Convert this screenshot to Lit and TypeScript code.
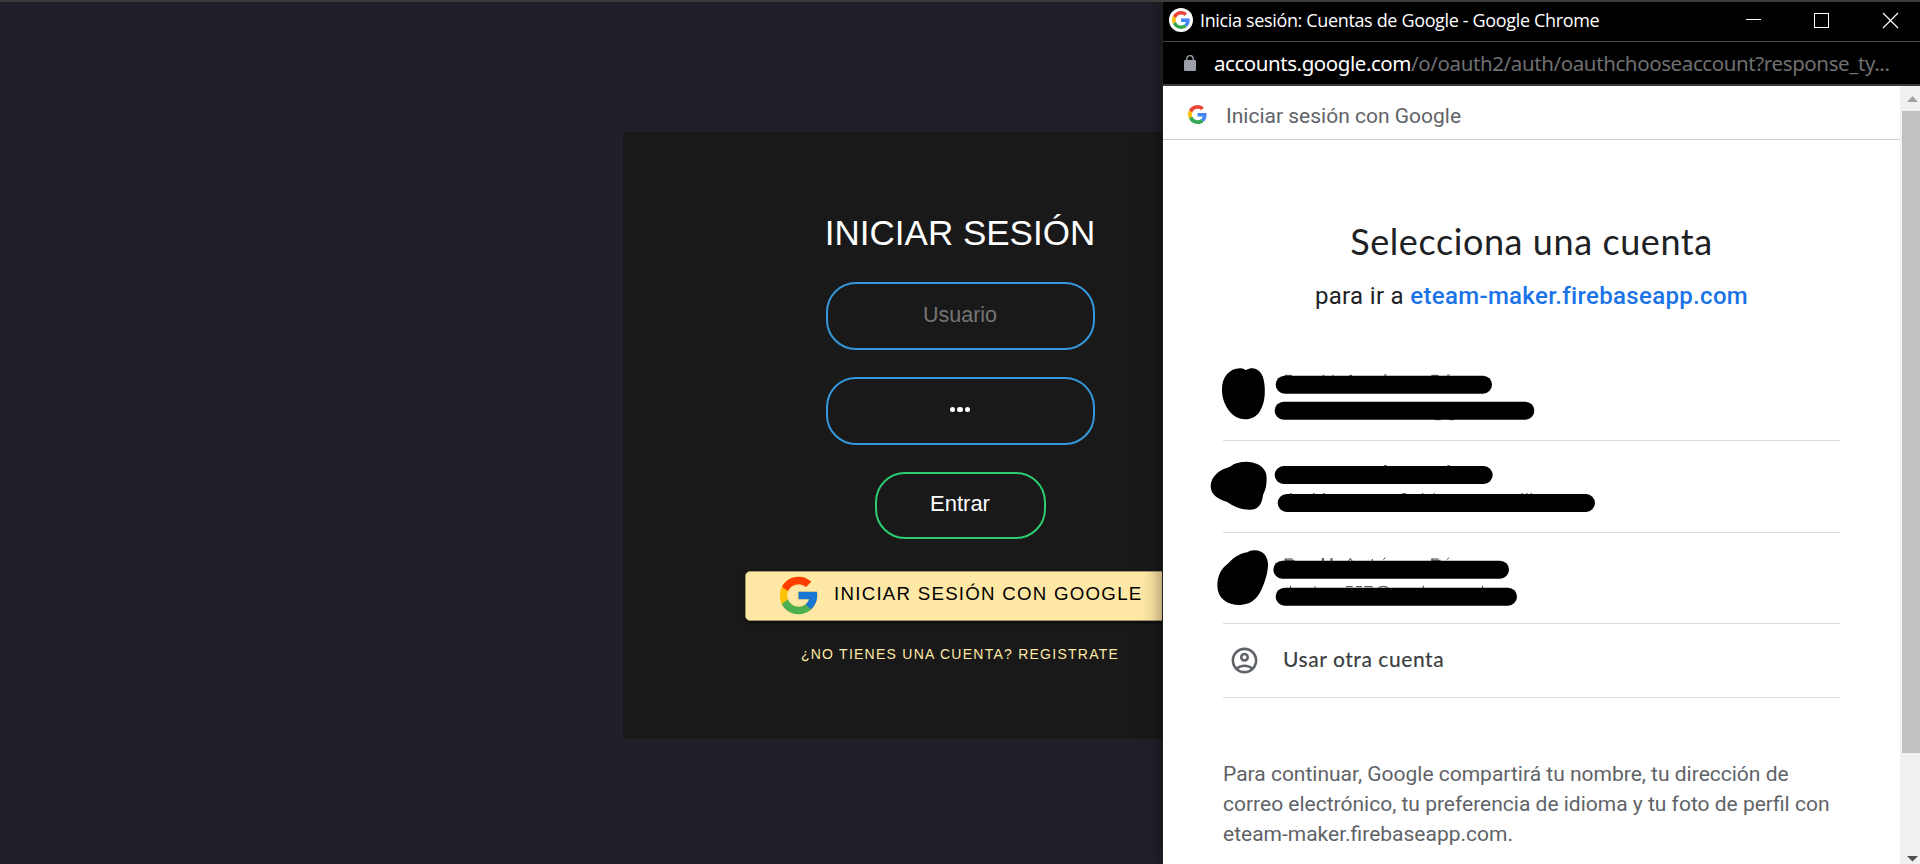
import { LitElement, html, css, svg } from "lit";
import { customElement } from "lit/decorators.js";

const googleG = (cls: string) => html`<svg class=${cls} viewBox="0 0 48 48" aria-hidden="true">
  <path fill="#ea4335" d="M24 9.5c3.54 0 6.71 1.22 9.21 3.6l6.85-6.85C35.9 2.38 30.47 0 24 0 14.62 0 6.51 5.38 2.56 13.22l7.98 6.19C12.43 13.72 17.74 9.5 24 9.5z"/>
  <path fill="#4285f4" d="M46.98 24.55c0-1.57-.15-3.09-.38-4.55H24v9.02h12.94c-.58 2.96-2.26 5.48-4.78 7.18l7.73 6c4.51-4.18 7.09-10.36 7.09-17.65z"/>
  <path fill="#fbbc05" d="M10.53 28.59c-.48-1.45-.76-2.99-.76-4.59s.27-3.14.76-4.59l-7.98-6.19C.92 16.46 0 20.12 0 24c0 3.88.92 7.54 2.56 10.78l7.97-6.19z"/>
  <path fill="#34a853" d="M24 48c6.48 0 11.93-2.13 15.89-5.81l-7.73-6c-2.15 1.45-4.92 2.3-8.16 2.3-6.26 0-11.57-4.22-13.47-9.91l-7.98 6.19C6.51 42.62 14.62 48 24 48z"/>
</svg>`;

interface Account { cls: string; viewBox: string; blob: string; bars: number[][]; bits: string; }

/* Hidden accounts: scribbled avatar plus two thick marker strokes [x1, x2, y]. */
const accounts: Account[] = [
  {
    cls: "row", viewBox: "99 -3 1851 273",
    blob: "M150 55C160 54 163 60 168 60C175 57 180 55 187 55C213 57 222 80 224 110C226 140 222 165 207 188C195 202 180 208 165 208C140 208 122 192 110 172C98 150 95 130 96 115C97 80 118 56 150 55Z",
    bars: [[257, 906, 104], [254, 1033, 182]],
    bits: "M284 76h22M398 76h5M427 76h4M478 76h8M582 75h8M724 76h22M771 75h8M736 209h16M778 209h14",
  },
  {
    cls: "row", viewBox: "99 273 1851 273",
    blob: "M168 335C200 335 222 350 228 370C232 390 230 415 219 435C216 460 208 478 182 479C150 480 130 468 110 455C85 448 62 435 62 408C63 380 85 360 120 350C135 338 150 336 168 335Z",
    bars: [[254, 908, 375], [263, 1215, 459]],
    bits: "M582 347h8M772 347h7M300 431h5M369 431h5M400 431h5M637 431h11M696 431h4M731 431h4M994 431h4M1009 431h4M1022 431h4",
  },
  {
    cls: "row short", viewBox: "99 39 1851 270",
    blob: "M192 91C220 90 234 110 234 135C233 165 222 190 215 208C200 240 180 254 150 255C110 255 83 235 82 198C82 165 95 145 115 130C130 113 150 100 172 97C178 93 185 91 192 91Z",
    bars: [[250, 957, 149], [257, 981, 230]],
    bits: "M284 117h24M286 117v7M284 121h30M397 114v9M400 114v9M423 114v9M426 114v9M481 115l-6 9M481 115l6 9M547 117v6M586 113l-6 6M724 117h22M726 117v7M724 121h28M777 113l-6 6M302 197v7M375 199v5M468 200h20M498 200h18M523 200h25M566 202q14-6 28 0M700 197v7M878 197v7",
  },
];

@customElement("app-root")
export class AppRoot extends LitElement {
  static styles = css`
    :host { display: block; width: 1920px; height: 864px; position: relative; overflow: hidden; background: #20202a; font-family: "Liberation Sans", Arial, sans-serif; box-sizing: border-box; border-top: 2px solid #3a3c3b; }
    * { box-sizing: border-box; }
    .page { display: flex; justify-content: center; padding-top: 129.6px; }
    .card { width: 675px; height: 607px; background: #191919; display: flex; flex-direction: column; align-items: center; color: #fff; }
    h1 { margin: 81px 0 0; font-weight: 400; font-size: 35px; line-height: 40px; white-space: nowrap; }
    .field, .enter { background: none; border: 2px solid #3498db; border-radius: 30px; width: 269px; height: 68px; text-align: center; color: #fff; font: 22px/26px "Liberation Sans", Arial, sans-serif; outline: none; padding: 0 0 3px; }
    .field { margin-top: 29px; font-size: 21.5px; padding-bottom: 1px; }
    .field::placeholder { color: #757575; opacity: 1; }
    .pass { margin-top: 27px; display: flex; align-items: center; justify-content: center; gap: 2px; padding: 0 0 2px; }
    .dot { width: 5.6px; height: 5.6px; border-radius: 50%; background: #fff; }
    .enter { width: 171px; height: 67px; border-color: #2ecc71; margin-top: 27px; padding-bottom: 2px; }
    .google { margin-top: 32.4px; width: 430px; height: 50px; border: 1px solid #a8996c; border-radius: 5px; background: #ffe8a5; color: #000; display: flex; align-items: center; padding: 0 0 0 30px; font: 18.7px/24px "Liberation Sans", Arial, sans-serif; letter-spacing: 1.25px; white-space: nowrap; box-shadow: 0 2px 3px rgba(0,0,0,.5); }
    .glogo { width: 45px; height: 45px; flex: none; margin-right: 13px; }
    .gtext { padding-bottom: 3px; }
    .signup { margin-top: 24px; color: #ffe8a5; font-size: 14px; line-height: 18px; letter-spacing: 1.25px; white-space: nowrap; }

    .popup { position: absolute; left: 1162px; top: -2px; width: 758px; height: 864px; border-left: 1px solid #202020; background: #fff; box-shadow: 0 0 18px rgba(0,0,0,.5); display: flex; flex-direction: column; }
    .title { height: 42px; background: #000; border-bottom: 1px solid #484848; display: flex; align-items: center; padding: 0 15px 2px 6px; color: #fff; font-family: "Open Sans", sans-serif; font-size: 18px; flex: none; }
    .fav { width: 24px; height: 24px; border-radius: 50%; background: #fff; display: flex; align-items: center; justify-content: center; margin-right: 7px; }
    .favg { width: 18px; height: 18px; }
    .ttext { flex: 1; white-space: nowrap; letter-spacing: -.35px; padding-top: 1px; }
    .controls { width: 160px; height: 20px; flex: none; }
    .url { height: 44px; background: #000; border-bottom: 2px solid #3a3a3a; display: flex; align-items: center; padding: 0 0 0 21px; color: #6f7072; font: 20.5px/28px "Noto Sans", sans-serif; flex: none; white-space: nowrap; }
    .lock { width: 12px; height: 16px; margin-right: 18px; }
    .host { color: #fff; letter-spacing: -.44px; }
    .path { letter-spacing: -.39px; }
    .body { display: flex; flex: 1; min-height: 0; font-family: Roboto, sans-serif; }
    .content { width: 737px; }
    .head { height: 54px; border-bottom: 1px solid #ccc; display: flex; align-items: center; padding: 4px 0 0 25px; gap: 19px; color: #5f6368; font-size: 21px; }
    .headg { width: 19px; height: 19px; }
    .htext { padding-top: 3px; }
    .pick { display: flex; flex-direction: column; align-items: center; height: 209px; color: #202124; padding-top: 79px; }
    h2 { margin: 0; font: 400 36px/44px Lato, sans-serif; letter-spacing: .58px; white-space: nowrap; }
    .sub { margin-top: 19px; font-size: 24px; line-height: 28px; letter-spacing: .32px; white-space: nowrap; }
    .app { color: #1a73e8; font-weight: 500; }
    .list { margin: 0 60px; width: 617px; }
    .row { height: 92px; border-bottom: 1px solid #dadce0; }
    .short { height: 91px; }
    .ink { display: block; width: 617px; height: 100%; overflow: visible; }
    .other { height: 74px; border-bottom: 1px solid #dadce0; display: flex; align-items: center; padding-left: 6px; color: #3c4043; font: 500 21px/26px Lato, sans-serif; letter-spacing: .55px; }
    .other span { padding-bottom: 3px; }
    .person { width: 31px; height: 31px; fill: #5f6368; margin: 0 23px 1px 0; }
    .note { margin: 61px 0 0 60px; font-size: 21px; line-height: 30px; color: #5f6368; white-space: nowrap; }
    .bar { width: 20px; background: #f1f1f1; display: flex; flex-direction: column; padding-left: 2px; }
    .arrow { height: 25px; width: 20px; flex: none; }
    .thumb { height: 642px; background: #c1c1c1; margin-bottom: auto; }
  `;

  render() {
    return html`
      <main class="page">
        <form class="card">
          <h1>INICIAR SESIÓN</h1>
          <input class="field" placeholder="Usuario" />
          <div class="field pass"><i class="dot"></i><i class="dot"></i><i class="dot"></i></div>
          <button class="enter" type="button">Entrar</button>
          <button class="google" type="button">
            <svg class="glogo" viewBox="0 0 48 48">
              <path fill="#FFC107" d="M43.611 20.083H42V20H24v8h11.303c-1.649 4.657-6.08 8-11.303 8-6.627 0-12-5.373-12-12s5.373-12 12-12c3.059 0 5.842 1.154 7.961 3.039l5.657-5.657C34.046 6.053 29.268 4 24 4 12.955 4 4 12.955 4 24s8.955 20 20 20 20-8.955 20-20c0-1.341-.138-2.65-.389-3.917z"/>
              <path fill="#FF3D00" d="M6.306 14.691l6.571 4.819C14.655 15.108 18.961 12 24 12c3.059 0 5.842 1.154 7.961 3.039l5.657-5.657C34.046 6.053 29.268 4 24 4 16.318 4 9.656 8.337 6.306 14.691z"/>
              <path fill="#4CAF50" d="M24 44c5.166 0 9.86-1.977 13.409-5.192l-6.19-5.238C29.211 35.091 26.715 36 24 36c-5.202 0-9.619-3.317-11.283-7.946l-6.522 5.025C9.505 39.556 16.227 44 24 44z"/>
              <path fill="#1976D2" d="M43.611 20.083H42V20H24v8h11.303c-.792 2.237-2.231 4.166-4.087 5.571l6.193 5.238C36.971 39.205 44 34 44 24c0-1.341-.138-2.65-.389-3.917z"/>
            </svg>
            <span class="gtext">INICIAR SESIÓN CON GOOGLE</span>
          </button>
          <div class="signup">¿NO TIENES UNA CUENTA? REGISTRATE</div>
        </form>
      </main>
      <section class="popup">
        <header class="title">
          <span class="fav">${googleG("favg")}</span>
          <span class="ttext">Inicia sesión: Cuentas de Google - Google Chrome</span>
          <svg class="controls" viewBox="0 0 160 20" fill="none" stroke="#fff" shape-rendering="crispEdges">
            <path d="M1 9.5h15M69.5 3.5h14v14h-14z"/>
            <path d="M138 3l15 15M153 3l-15 15" stroke-width="1.2" shape-rendering="auto"/>
          </svg>
        </header>
        <div class="url">
          <svg class="lock" viewBox="0 0 12 16"><rect y="5" width="12" height="11" rx="1.3" fill="#9aa0a6"/><path d="M2.8 6V3.8a3.2 3.2 0 0 1 6.4 0V6" fill="none" stroke="#9aa0a6" stroke-width="1.4"/></svg>
          <span class="host">accounts.google.com</span><span class="path">/o/oauth2/auth/oauthchooseaccount?response_ty...</span>
        </div>
        <div class="body">
          <div class="content">
            <div class="head">${googleG("headg")}<span class="htext">Iniciar sesión con Google</span></div>
            <div class="pick">
              <h2>Selecciona una cuenta</h2>
              <div class="sub">para ir a <span class="app">eteam-maker.firebaseapp.com</span></div>
            </div>
            <div class="list">
              ${accounts.map(a => html`<div class=${a.cls}>
                <svg class="ink" viewBox=${a.viewBox}>
                  <path d=${a.bits} stroke="#3c4043" stroke-width="3" fill="none"/>
                  <path d=${a.blob}/>
                  ${a.bars.map(([x1, x2, y]) => svg`<rect x=${x1} y=${y - 27} width=${x2 - x1} height="54" rx="27"/>`)}
                </svg></div>`)}
              <div class="other">
                <svg class="person" viewBox="0 0 24 24"><path d="M12 2C6.48 2 2 6.48 2 12s4.48 10 10 10 10-4.48 10-10S17.52 2 12 2zM7.35 18.5C8.66 17.56 10.26 17 12 17s3.34.56 4.65 1.5C15.34 19.44 13.74 20 12 20s-3.34-.56-4.65-1.5zm10.79-1.38C16.45 15.8 14.32 15 12 15s-4.45.8-6.14 2.12C4.7 15.73 4 13.95 4 12c0-4.42 3.58-8 8-8s8 3.58 8 8c0 1.95-.7 3.73-1.86 5.12zM12 6c-1.93 0-3.5 1.57-3.5 3.5S10.07 13 12 13s3.5-1.57 3.5-3.5S13.93 6 12 6zm0 5c-.83 0-1.5-.67-1.5-1.5S11.17 8 12 8s1.5.67 1.5 1.5S12.83 11 12 11z"/></svg>
                <span>Usar otra cuenta</span>
              </div>
            </div>
            <div class="note">Para continuar, Google compartirá tu nombre, tu dirección de<br />correo electrónico, tu preferencia de idioma y tu foto de perfil con<br />eteam-maker.firebaseapp.com.</div>
          </div>
          <div class="bar">
            <svg class="arrow" viewBox="0 0 20 25"><path d="M5 16l5.5-6 5.5 6z" fill="#a3a3a3"/></svg>
            <div class="thumb"></div>
            <svg class="arrow" viewBox="0 0 20 25"><path d="M5 17h11l-5.5 5.5z" fill="#505050"/></svg>
          </div>
        </div>
      </section>`;
  }
}
